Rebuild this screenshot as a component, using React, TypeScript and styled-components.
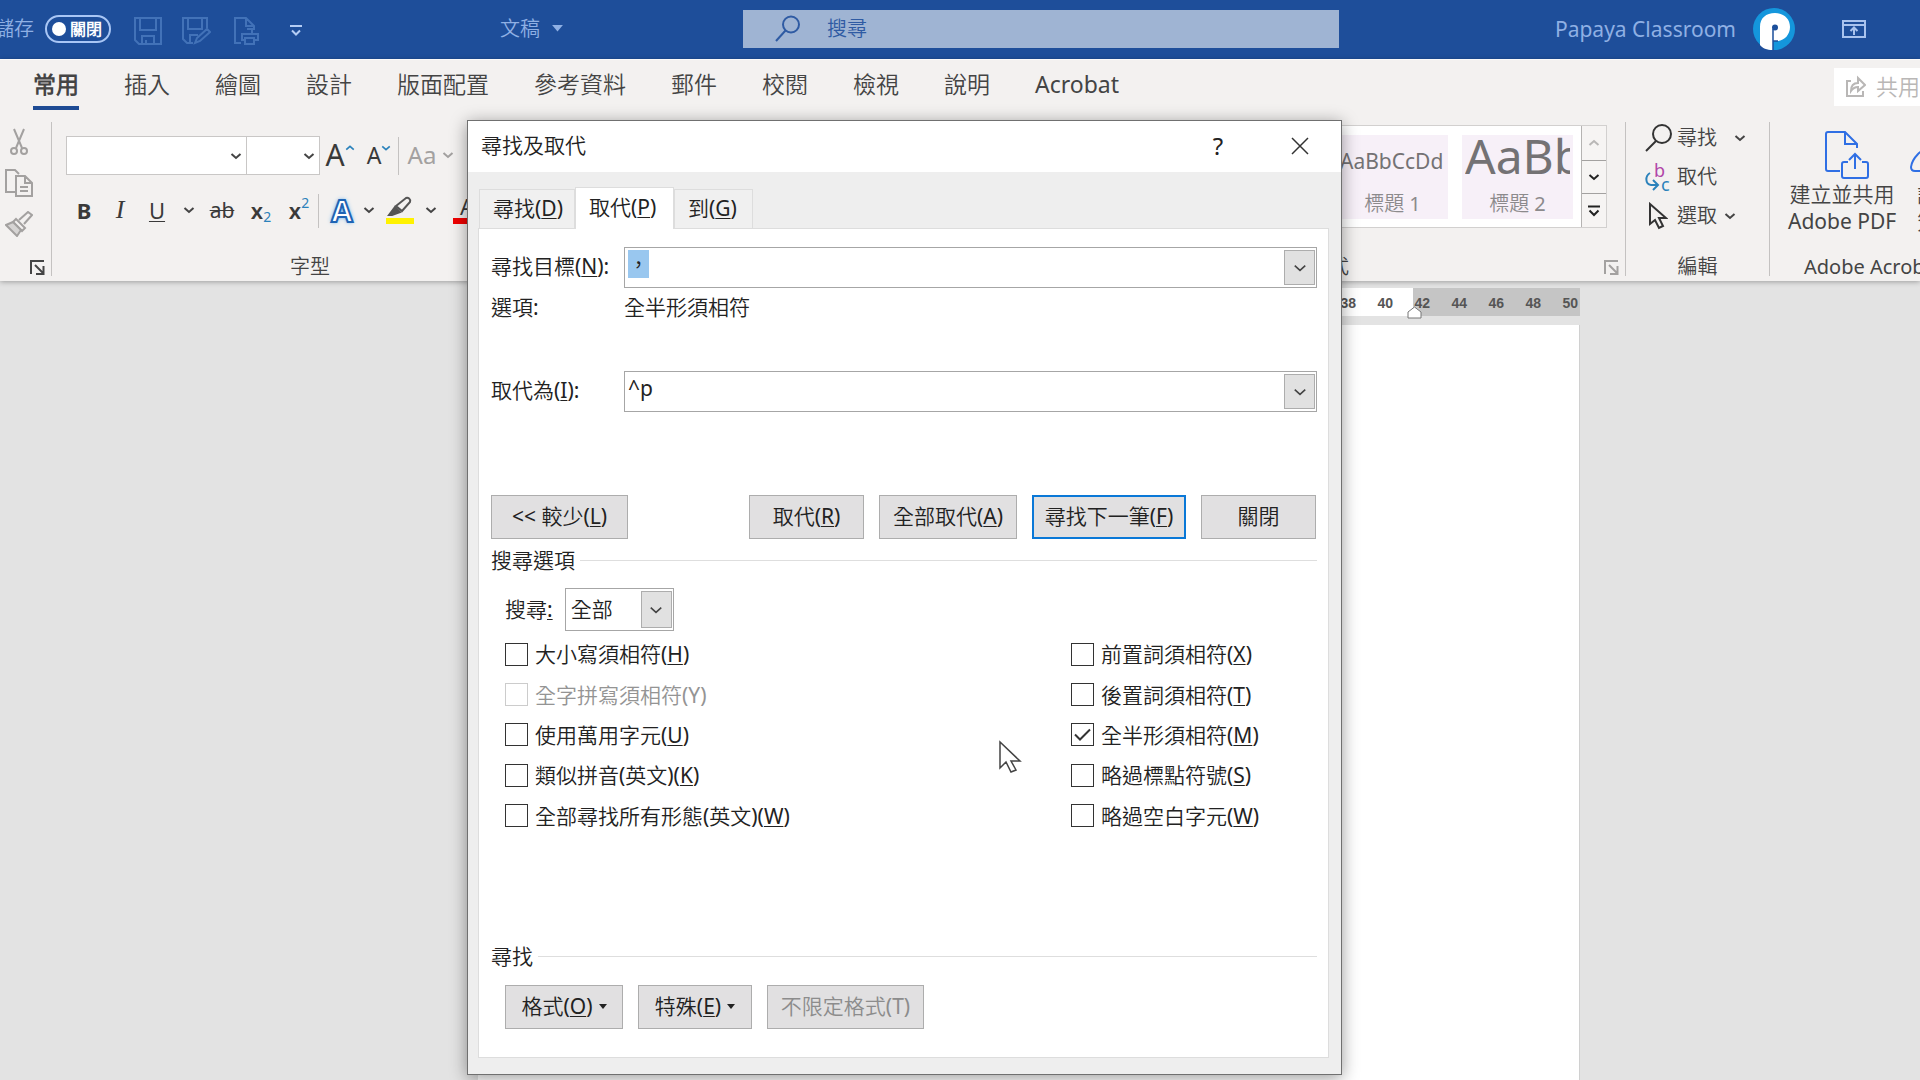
import React, { useEffect, useRef } from 'react';
import styled, { createGlobalStyle } from 'styled-components';

const ui = '"Noto Sans", "Noto Sans CJK TC DemiLight", "Noto Sans CJK TC", sans-serif';

const GlobalStyle = createGlobalStyle`
  * { box-sizing: border-box; }
  body { margin: 0; font-family: ${ui}; font-weight: 400; color: #444; background: #e3e3e3; }
  button, input, select { font: inherit; color: inherit; margin: 0; padding: 0; border: 0; background: none; border-radius: 0; }
  h1, h2, p { margin: 0; font: inherit; }
  u { text-underline-offset: 2px; text-decoration-thickness: 1px; }
`;

const Screen = styled.div`
  height: 100vh;
  overflow: hidden;
  display: flex;
  flex-direction: column;
`;

/* ---------- title bar ---------- */

const TitleBar = styled.header`
  flex: none;
  height: 59px;
  display: grid;
  grid-template-columns: minmax(0, 743fr) minmax(0, 596fr) minmax(0, 581fr);
  align-items: center;
  background: #1e4e9a;
  color: #8fb0e4;
  line-height: 28px;
  font-size: 20px;
  padding-bottom: 2px;
`;

const QuickAccess = styled.div`
  display: flex;
  align-items: center;
  overflow: hidden;
`;

const AutoSave = styled.label`
  display: flex;
  align-items: center;
  gap: 11px;
  margin-left: -6px;
  margin-right: 14px;
`;

const Toggle = styled.button`
  display: flex;
  align-items: center;
  gap: 4px;
  width: 66px;
  height: 28px;
  padding-left: 5px;
  border: 2px solid #a9c6f5;
  border-radius: 14px;
  color: #fff;
  font-size: 16px;
  font-weight: 700;
  line-height: 24px;
`;

const Knob = styled.span`
  width: 14px;
  height: 14px;
  border-radius: 50%;
  background: #fff;
`;

const QuickButton = styled.button<{ $w?: number }>`
  display: flex;
  align-items: center;
  justify-content: center;
  width: ${(p) => p.$w ?? 50}px;
  height: 40px;
  padding-top: 4px;
  color: #4272b8;
`;

const DocTitle = styled.button`
  display: flex;
  align-items: center;
  gap: 12px;
  margin-left: 179px;
`;

const SearchBox = styled.label`
  display: flex;
  align-items: center;
  gap: 26px;
  height: 38px;
  padding-left: 32px;
  background: #9fb4d3;
  color: #2f5ba3;
`;

const SearchInput = styled.input`
  flex: 1;
  min-width: 0;
  outline: none;
  &::placeholder { color: #2f5ba3; opacity: 1; }
`;

const Account = styled.div`
  display: flex;
  align-items: center;
  justify-content: flex-end;
  padding-right: 54px;
  gap: 17px;
  font-size: 21px;
`;

const WindowButton = styled.button`
  display: flex;
  margin-left: 30px;
  color: #a9c3ee;
`;

/* ---------- ribbon ---------- */

const Ribbon = styled.section`
  flex: none;
  position: relative;
  background: #f3f1f0;
  border-top: 1px solid #fbfaf9;
  box-shadow: 0 1px 5px rgba(0, 0, 0, 0.3);
`;

const RibbonTabs = styled.nav`
  display: flex;
  align-items: flex-start;
  gap: 45px;
  height: 55px;
  padding-left: 33px;
`;

const RibbonTab = styled.button<{ $active?: boolean }>`
  height: 50px;
  padding-top: 2px;
  white-space: nowrap;
  font-size: 23px;
  line-height: 32px;
  font-weight: ${(p) => (p.$active ? 700 : 400)};
  border-bottom: 4px solid ${(p) => (p.$active ? '#1e4b94' : 'transparent')};
`;

const ShareButton = styled.button`
  display: flex;
  align-items: center;
  gap: 10px;
  width: 86px;
  height: 38px;
  margin: 8px 0 0 auto;
  padding: 0 0 2px 12px;
  overflow: hidden;
  white-space: nowrap;
  background: #fff;
  color: #b9b7b6;
  font-size: 22px;
  line-height: 32px;
`;

const RibbonBody = styled.div`
  display: flex;
  height: 166px;
  overflow: hidden;
  padding: 3px 0 2px;
`;

const Divider = styled.span<{ $h?: number }>`
  flex: none;
  width: 1px;
  align-self: center;
  height: ${(p) => (p.$h ? p.$h + 'px' : '154px')};
  background: #c4c2c1;
`;

const Group = styled.div<{ $w?: number; $pad?: number }>`
  display: flex;
  flex-direction: column;
  flex: ${(p) => (p.$w ? `0 0 ${p.$w}px` : '1 1 0')};
  min-width: 0;
  padding-left: ${(p) => p.$pad ?? 0}px;
`;

const GroupFooter = styled.div<{ $shift?: number; $start?: number }>`
  display: flex;
  justify-content: ${(p) => (p.$start ? 'flex-start' : 'center')};
  align-items: center;
  position: relative;
  margin-top: auto;
  height: 24px;
  margin-left: ${(p) => p.$start ?? -(p.$shift ?? 0)}px;
  font-size: 20px;
  line-height: 24px;
  white-space: nowrap;
`;

const Launcher = styled.button<{ $faint?: boolean }>`
  display: flex;
  position: absolute;
  right: 6px;
  top: 5px;
  color: ${(p) => (p.$faint ? '#a3a1a0' : '#444')};
`;

const ClipButton = styled.button`
  display: flex;
  align-items: center;
  justify-content: center;
  height: 41px;
  width: 38px;
  color: #a3a1a0;
`;

const ToolRow = styled.div<{ $top: number; $h: number }>`
  display: flex;
  align-items: center;
  height: ${(p) => p.$h}px;
  margin-top: ${(p) => p.$top}px;
`;

const Tool = styled.button<{ $w: number }>`
  display: flex;
  flex: none;
  align-items: center;
  justify-content: center;
  width: ${(p) => p.$w}px;
  height: 34px;
  padding-bottom: 2px;
  font-size: 22px;
  line-height: 32px;
  svg { flex: none; }
`;

const Letter = styled.span<{ $size?: number; $weight?: number; $color?: string }>`
  font-size: ${(p) => p.$size ?? 22}px;
  font-weight: ${(p) => p.$weight ?? 400};
  color: ${(p) => p.$color ?? '#3a3a3a'};
`;

const ItalicLetter = styled(Letter)`
  font-family: "Liberation Serif", serif;
  font-style: italic;
  font-size: 26px;
`;

const StruckLetters = styled(Letter)`
  text-decoration: line-through;
  text-decoration-thickness: 1px;
`;

const Script = styled.span<{ $up?: boolean }>`
  align-self: ${(p) => (p.$up ? 'flex-start' : 'flex-end')};
  font-size: 14px;
  line-height: 18px;
  font-weight: 400;
  color: #2b82bb;
`;

const GlowLetter = styled.span`
  font-size: 31px;
  font-weight: 700;
  color: #fff;
  -webkit-text-stroke: 2px #1f64b4;
  text-shadow: 0 0 3px #6db4ee, 0 0 5px #6db4ee;
`;

const CaseCaret = styled.span`
  display: flex;
  margin-left: 6px;
  color: #a3a1a0;
`;

const ColorBarTool = styled.span`
  display: flex;
  flex-direction: column;
  align-items: center;
  line-height: 20px;
`;

const ColorBar = styled.span<{ $color: string }>`
  width: 28px;
  height: 6px;
  margin-top: 2px;
  background: ${(p) => p.$color};
`;

const RibbonSelectWrap = styled.span<{ $w: number }>`
  display: grid;
  flex: none;
  align-items: center;
  width: ${(p) => p.$w}px;
  height: 39px;
  background: #fff;
  border: 1px solid #c9c7c6;
  & + & { border-left: 0; }
  > * { grid-area: 1 / 1; }
  > svg { justify-self: end; margin-right: 4px; pointer-events: none; }
`;

const RibbonSelect = styled.select`
  appearance: none;
  width: 100%;
  height: 100%;
  outline: none;
`;

const Gallery = styled.div`
  display: flex;
  align-self: flex-end;
  margin: 7px 18px 0 0;
  height: 103px;
  border: 1px solid #d2d0cf;
  background: #fff;
`;

const StyleCards = styled.div`
  display: flex;
  align-items: center;
  gap: 14px;
  padding: 0 8px;
`;

const StyleCard = styled.button`
  display: flex;
  flex-direction: column;
  align-items: center;
  justify-content: space-between;
  width: 111px;
  height: 84px;
  background: #f7f0f8;
  color: #8c8a8c;
  font-size: 20px;
  line-height: 30px;
`;

const Sample = styled.span<{ $size: number; $line: number }>`
  width: 105px;
  overflow: hidden;
  white-space: nowrap;
  text-align: left;
  font-size: ${(p) => p.$size}px;
  line-height: ${(p) => p.$line}px;
  color: #747274;
`;

const GalleryScroll = styled.div`
  display: grid;
  grid-template-rows: repeat(3, 1fr);
  width: 25px;
  border-left: 1px solid #b5b3b2;
`;

const ScrollButton = styled.button<{ $off?: boolean }>`
  display: flex;
  align-items: center;
  justify-content: center;
  background: #f6f4f3;
  color: ${(p) => (p.$off ? '#b9b7b6' : '#222')};
  & + & { border-top: 1px solid #a3a1a0; }
`;

const EditButton = styled.button`
  display: flex;
  align-items: center;
  gap: 5px;
  height: 39px;
  font-size: 20px;
  line-height: 28px;
`;

const EditIcon = styled.span`
  display: flex;
  justify-content: center;
  width: 28px;
`;

const EditCaret = styled.span<{ $gap: number }>`
  display: flex;
  margin-left: ${(p) => p.$gap}px;
`;

const AdobeRow = styled.div`
  display: flex;
  gap: 14px;
  padding-top: 13px;
`;

const AdobeButton = styled.button<{ $lead?: number }>`
  display: flex;
  flex-direction: column;
  flex: none;
  align-items: center;
  min-width: 56px;
  font-size: 21px;
  line-height: 27px;
  svg { margin: 0 0 2px ${(p) => p.$lead ?? 0}px; }
`;

/* ---------- document ---------- */

const Workspace = styled.main`
  flex: 1;
  display: flex;
  flex-direction: column;
  margin: 0 340px 0 478px;
`;

const Ruler = styled.div`
  position: relative;
  display: flex;
  justify-content: flex-end;
  flex: none;
  height: 28px;
  margin: 7px 0 9px;
  padding-right: 2px;
  background: linear-gradient(to left, #c5c5c5 167px, #fff 167px);
  font: 700 14px/30px "Liberation Sans", sans-serif;
  color: #555;
`;

const RulerMark = styled.span`
  width: 37px;
  text-align: right;
`;

const IndentMarker = styled.svg`
  position: absolute;
  right: 158px;
  top: 18px;
`;

const Page = styled.div`
  flex: 1;
  background: #fff;
  border-right: 1px solid #d0d0d0;
`;

/* ---------- dialog ---------- */

const Dialog = styled.div`
  position: absolute;
  left: 467px;
  top: 120px;
  width: 875px;
  border: 1px solid #707070;
  background: #eee;
  box-shadow: 0 3px 16px rgba(0, 0, 0, 0.4);
  color: #222;
  font-size: 21px;
  line-height: 28px;
  white-space: nowrap;
`;

const DialogTitle = styled.div`
  display: flex;
  align-items: center;
  height: 51px;
  padding: 0 0 3px 13px;
  background: #fff;
`;

const DialogTitleButton = styled.button`
  display: flex;
  align-items: center;
  justify-content: center;
  width: 82px;
  height: 48px;
  padding-top: 2px;
  font-size: 24px;
  h1 + & { margin-left: auto; }
`;

const DialogTabs = styled.div`
  display: flex;
  align-items: flex-end;
  height: 56px;
  padding-left: 11px;
`;

const DialogTab = styled.button<{ $w: number; $active?: boolean }>`
  position: relative;
  width: ${(p) => p.$w}px;
  height: ${(p) => (p.$active ? 42 : 39)}px;
  margin-bottom: ${(p) => (p.$active ? -1 : 0)}px;
  padding: 0 0 3px 13px;
  text-align: left;
  background: ${(p) => (p.$active ? '#fff' : '#f0f0f0')};
  border: 1px solid #ddd;
  border-bottom: 0;
`;

const Panel = styled.div`
  margin: 0 12px 16px 10px;
  padding: 18px 11px 28px 12px;
  border: 1px solid #ddd;
  background: #fff;
`;

const FieldRow = styled.div<{ $after?: number }>`
  display: grid;
  grid-template-columns: 133px 1fr;
  align-items: center;
  min-height: 41px;
  margin-bottom: ${(p) => p.$after ?? 0}px;
  > label, > span { padding-bottom: 3px; }
`;

const ComboBox = styled.div`
  display: flex;
  width: 100%;
  height: 41px;
  padding: 2px 1px 2px 2px;
  border: 1px solid #a6a6a6;
  background: #fff;
`;

const ComboInput = styled.input`
  flex: 1;
  min-width: 0;
  height: 28px;
  padding-left: 1px;
  line-height: 28px;
  outline: none;
  &::selection { background: #99c7ef; color: #222; }
`;

const ComboButton = styled.button`
  display: flex;
  align-items: center;
  justify-content: center;
  width: 31px;
  background: #e1e1e1;
  border: 1px solid #adadad;
  color: #444;
`;

const ScopeBox = styled.span`
  display: grid;
  align-items: center;
  width: 109px;
  height: 43px;
  padding: 2px 1px 2px 2px;
  border: 1px solid #a6a6a6;
  > * { grid-area: 1 / 1; }
`;

const ScopeSelect = styled.select`
  appearance: none;
  width: 100%;
  height: 37px;
  padding: 0 0 2px 3px;
  outline: none;
`;

const ScopeArrow = styled.span`
  display: flex;
  align-items: center;
  justify-content: center;
  justify-self: end;
  width: 31px;
  height: 37px;
  background: #e1e1e1;
  border: 1px solid #adadad;
  color: #444;
  pointer-events: none;
`;

const ButtonRow = styled.div<{ $top: number; $indent?: number }>`
  display: flex;
  gap: 15px;
  margin-top: ${(p) => p.$top}px;
  padding: 0 1px 0 ${(p) => p.$indent ?? 0}px;
`;

const PushButton = styled.button<{ $w: number; $primary?: boolean; $push?: boolean }>`
  display: flex;
  align-items: center;
  justify-content: center;
  gap: 6px;
  width: ${(p) => p.$w}px;
  height: 44px;
  padding-bottom: 2px;
  margin-right: ${(p) => (p.$push ? 'auto' : 0)};
  background: #e1e0e1;
  border: ${(p) => (p.$primary ? '2px solid #0a78d7' : '1px solid #adadad')};
  &:disabled { color: #8c8c8c; }
`;

const SectionTitle = styled.h2<{ $top?: number }>`
  display: flex;
  align-items: center;
  gap: 5px;
  height: 42px;
  margin-top: ${(p) => p.$top ?? 0}px;
  &::after { content: ''; flex: 1; height: 1px; background: #dedede; }
`;

const ScopeRow = styled.div`
  display: flex;
  align-items: center;
  gap: 12px;
  margin: 7px 0 3px;
  padding-left: 14px;
  > label { padding-bottom: 2px; }
`;

const Options = styled.div`
  display: grid;
  grid-template-columns: 566fr 246fr;
  grid-template-rows: repeat(5, 1fr);
  grid-auto-flow: column;
  height: 202px;
  padding-left: 14px;
`;

const Option = styled.label<{ $off?: boolean }>`
  display: flex;
  align-items: center;
  gap: 7px;
  color: ${(p) => (p.$off ? '#949494' : 'inherit')};
`;

const TickCell = styled.span`
  display: grid;
  > * { grid-area: 1 / 1; }
  svg { pointer-events: none; display: none; }
  input:checked + svg { display: block; }
`;

const Tick = styled.input`
  appearance: none;
  width: 23px;
  height: 23px;
  border: 1px solid #333;
  background: #fff;
  &:disabled { border-color: #ccc; }
`;

const Pointer = styled.svg`
  position: absolute;
  left: 530px;
  top: 619px;
`;

/* ---------- drawings ---------- */

const Chevron = ({ size = 12, weight = 2, up = false }: { size?: number; weight?: number; up?: boolean }) => (
  <svg width={size} height={size} viewBox="0 0 12 12" fill="none" stroke="currentColor" strokeWidth={weight}>
    <path d={up ? 'M1.500 8 6 4l4.500 4' : 'M1.500 4 6 8l4.500-4'} />
  </svg>
);

const ComboArrow = () => <Chevron size={14} weight={1.4} />;

const Caret = ({ w = 10 }: { w?: number }) => (
  <svg width={w} height={w / 2 + 1} viewBox="0 0 10 6" fill="currentColor"><path d="M0 0h10L5 6z" /></svg>
);

const LaunchIcon = () => (
  <svg width="15" height="15" viewBox="0 0 15 15" fill="none" stroke="currentColor" strokeWidth="2">
    <path d="M1 14V1h13M5 5l8 8M13.500 6v8H6" />
  </svg>
);

const Access = ({ k }: { k: string }) => <>(<u>{k}</u>)</>;

const leftOptions = [
  { text: '大小寫須相符', k: 'H' },
  { text: '全字拼寫須相符', k: 'Y', off: true },
  { text: '使用萬用字元', k: 'U' },
  { text: '類似拼音(英文)', k: 'K' },
  { text: '全部尋找所有形態(英文)', k: 'W' },
];

const rightOptions = [
  { text: '前置詞須相符', k: 'X' },
  { text: '後置詞須相符', k: 'T' },
  { text: '全半形須相符', k: 'M', on: true },
  { text: '略過標點符號', k: 'S' },
  { text: '略過空白字元', k: 'W' },
];

const ribbonTabs = ['常用', '插入', '繪圖', '設計', '版面配置', '參考資料', '郵件', '校閱', '檢視', '說明', 'Acrobat'];

function OptionItem({ text, k, off, on }: { text: string; k: string; off?: boolean; on?: boolean }) {
  return (
    <Option $off={off}>
      <TickCell>
        <Tick type="checkbox" disabled={off} defaultChecked={on} />
        <svg width="23" height="23" viewBox="0 0 23 23" fill="none" stroke="#333" strokeWidth="2"><path d="M4 11.500 9 16.500 19 6.500" /></svg>
      </TickCell>
      <span>{text}{off ? `(${k})` : <Access k={k} />}</span>
    </Option>
  );
}

function Header() {
  return (
    <TitleBar>
      <QuickAccess>
        <AutoSave>
          儲存
          <Toggle><Knob />關閉</Toggle>
        </AutoSave>
        <QuickButton $w={46} aria-label="儲存檔案">
          <svg width="28" height="28" viewBox="0 0 28 28" fill="none" stroke="currentColor" strokeWidth="2">
            <path d="M1 1h26v26H5l-4-4zM6 1v12h16V1M8 27v-8h12v8M12 27v-4" />
          </svg>
        </QuickButton>
        <QuickButton aria-label="另存">
          <svg width="30" height="28" viewBox="0 0 30 28" fill="none" stroke="currentColor" strokeWidth="2">
            <path d="M12 26H6l-4-4V1h24v10M7 1v11h14V1M9 26v-8h8M14 26l2-5L26 12l3 3-10 9z" />
          </svg>
        </QuickButton>
        <QuickButton aria-label="列印">
          <svg width="26" height="28" viewBox="0 0 26 28" fill="none" stroke="currentColor" strokeWidth="2">
            <path d="M8 26H2V1h11l8 8v4M13 1v8h8M14 12h5v6M12 23H9v-6h16v6h-3M12 21h9v6h-9z" />
          </svg>
        </QuickButton>
        <QuickButton $w={50} aria-label="自訂快速存取">
          <svg width="14" height="12" viewBox="0 0 14 12" fill="none" stroke="#b4cdf5" strokeWidth="2"><path d="M1 1h12M3 5.500l4 4 4-4" /></svg>
        </QuickButton>
        <DocTitle>文稿<Caret w={11} /></DocTitle>
      </QuickAccess>
      <SearchBox>
        <svg width="26" height="27" viewBox="0 0 26 27" fill="none" stroke="currentColor" strokeWidth="2">
          <circle cx="16" cy="9.500" r="8" /><path d="M10.500 15.500 1 26" />
        </svg>
        <SearchInput placeholder="搜尋" aria-label="搜尋" />
      </SearchBox>
      <Account>
        Papaya Classroom
        <svg width="42" height="42" viewBox="0 0 42 42">
          <circle cx="21" cy="21" r="21" fill="#1496dc" />
          <path d="M7 37V19C7 10 13 5 22 5s15 6 15 14-6 14-13 14h-4v9C14 42 9 40 7 37z" fill="#fff" />
          <path d="M20 42V21M20 33h5" stroke="#1b4f9b" strokeWidth="1.500" fill="none" />
          <circle cx="22" cy="19.500" r="3" fill="#1b4f9b" />
        </svg>
        <WindowButton aria-label="功能區顯示選項">
          <svg width="24" height="18" viewBox="0 0 24 18" fill="none" stroke="currentColor" strokeWidth="2">
            <path d="M1 1h22v16H1zM1 5h22M12 15V8M8.500 11 12 7.500 15.500 11" />
          </svg>
        </WindowButton>
      </Account>
    </TitleBar>
  );
}

function FontGroup() {
  return (
    <Group $w={516} $pad={14}>
      <ToolRow $top={18} $h={39}>
        <RibbonSelectWrap $w={181}><RibbonSelect aria-label="字型名稱"><option> </option></RibbonSelect><Chevron /></RibbonSelectWrap>
        <RibbonSelectWrap $w={73}><RibbonSelect aria-label="字型大小"><option> </option></RibbonSelect><Chevron /></RibbonSelectWrap>
        <Tool $w={40}><Letter $size={30}>A</Letter><Script $up><Chevron size={10} up /></Script></Tool>
        <Tool $w={38}><Letter $size={23}>A</Letter><Script $up><Chevron size={10} /></Script></Tool>
        <Divider $h={38} />
        <Tool $w={64}><Letter $size={24} $color="#a3a1a0">Aa</Letter><CaseCaret><Chevron /></CaseCaret></Tool>
      </ToolRow>
      <ToolRow $top={18} $h={36}>
        <Tool $w={36}><Letter $weight={700}>B</Letter></Tool>
        <Tool $w={36}><ItalicLetter>I</ItalicLetter></Tool>
        <Tool $w={38}><Letter><u>U</u></Letter></Tool>
        <Tool $w={26}><Chevron /></Tool>
        <Tool $w={40}><StruckLetters $size={21}>ab</StruckLetters></Tool>
        <Tool $w={38}><Letter $weight={600}>x</Letter><Script>2</Script></Tool>
        <Tool $w={38}><Letter $weight={600}>x</Letter><Script $up>2</Script></Tool>
        <Divider $h={34} />
        <Tool $w={46}><GlowLetter>A</GlowLetter></Tool>
        <Tool $w={8}><Chevron /></Tool>
        <Tool $w={54}>
          <ColorBarTool>
            <svg width="26" height="20" viewBox="0 0 26 20" fill="none" stroke="#555" strokeWidth="2">
              <path d="M9 10 19 2c2-1 5 1 4 4l-8 9zM9 10l6 5" /><path d="M8 11l5 5-8 3H2z" fill="#555" />
            </svg>
            <ColorBar $color="#fff200" />
          </ColorBarTool>
        </Tool>
        <Tool $w={8}><Chevron /></Tool>
        <Tool $w={64}><ColorBarTool><Letter $size={22}>A</Letter><ColorBar $color="#f00000" /></ColorBarTool></Tool>
      </ToolRow>
      <GroupFooter $shift={14}>字型</GroupFooter>
    </Group>
  );
}

function RibbonArea() {
  return (
    <Ribbon>
      <RibbonTabs>
        {ribbonTabs.map((t, i) => <RibbonTab key={t} $active={i === 0}>{t}</RibbonTab>)}
        <ShareButton>
          <svg width="20" height="22" viewBox="0 0 20 22" fill="none" stroke="currentColor" strokeWidth="2">
            <path d="M5 6H1v15h16v-5M5 16c0-6 3-8 7-8V3l7 7-7 6v-4c-3 0-5 1-7 4z" />
          </svg>
          共用
        </ShareButton>
      </RibbonTabs>
      <RibbonBody>
        <Group $w={51}>
          <ToolRow $top={3} $h={41}>
            <ClipButton aria-label="剪下">
              <svg width="18" height="28" viewBox="0 0 18 28" fill="none" stroke="currentColor" strokeWidth="2">
                <path d="M4 1l8 19M14 1 6 20" /><circle cx="4" cy="23" r="3" /><circle cx="14" cy="23" r="3" />
              </svg>
            </ClipButton>
          </ToolRow>
          <ToolRow $top={0} $h={41}>
            <ClipButton aria-label="複製">
              <svg width="28" height="28" viewBox="0 0 28 28" fill="none" stroke="currentColor" strokeWidth="2">
                <path d="M10 23H1V1h9l4 4M11 7h9l7 7v13H11zM20 7v7h7M15 18h8M15 22h8" />
              </svg>
            </ClipButton>
          </ToolRow>
          <ToolRow $top={0} $h={41}>
            <ClipButton aria-label="複製格式">
              <svg width="28" height="26" viewBox="0 0 28 26" fill="none" stroke="currentColor" strokeWidth="2">
                <path d="M14 9l9-8 4 3-8 9M11 8l9 9-3 3-9-9z" /><path d="M8 11 1 14l11 11 4-6z" fill="#d6d4d3" />
              </svg>
            </ClipButton>
          </ToolRow>
          <GroupFooter><Launcher aria-label="剪貼簿設定"><LaunchIcon /></Launcher></GroupFooter>
        </Group>
        <Divider />
        <FontGroup />
        <Divider />
        <Group />
        <Divider />
        <Group $w={592}>
          <Gallery>
            <StyleCards>
              <StyleCard><Sample $size={21} $line={52}>AaBbCcDd</Sample>標題 1</StyleCard>
              <StyleCard><Sample $size={48} $line={42}>AaBb</Sample>標題 2</StyleCard>
            </StyleCards>
            <GalleryScroll>
              <ScrollButton $off aria-label="上一列"><Chevron up /></ScrollButton>
              <ScrollButton aria-label="下一列"><Chevron /></ScrollButton>
              <ScrollButton aria-label="更多樣式">
                <svg width="14" height="12" viewBox="0 0 14 12" fill="none" stroke="currentColor" strokeWidth="2"><path d="M1 1.500h12M2.500 5.500 7 10l4.500-4.500" /></svg>
              </ScrollButton>
            </GalleryScroll>
          </Gallery>
          <GroupFooter>樣式<Launcher $faint aria-label="樣式設定"><LaunchIcon /></Launcher></GroupFooter>
        </Group>
        <Divider />
        <Group $w={143} $pad={18}>
          <EditButton>
            <EditIcon>
              <svg width="28" height="28" viewBox="0 0 28 28" fill="none" stroke="#333" strokeWidth="2"><circle cx="18" cy="10" r="9" /><path d="M12 17 2 27" /></svg>
            </EditIcon>
            尋找<EditCaret $gap={12}><Chevron /></EditCaret>
          </EditButton>
          <EditButton>
            <EditIcon>
              <svg width="26" height="30" viewBox="0 0 26 30" fill="none" strokeWidth="2">
                <text x="9" y="15" fontSize="18" fill="#b146a8">b</text>
                <text x="16" y="29" fontSize="18" fill="#2b82bb">c</text>
                <path d="M5 11c-5 3-5 11 1 12h6M8 18l5 5-5 5" stroke="#2b82bb" />
              </svg>
            </EditIcon>
            取代
          </EditButton>
          <EditButton>
            <EditIcon>
              <svg width="20" height="28" viewBox="0 0 20 28" fill="none" stroke="#333" strokeWidth="2"><path d="M2 2v20l5-4 4 8 4-2-4-8h7z" /></svg>
            </EditIcon>
            選取<EditCaret $gap={2}><Chevron /></EditCaret>
          </EditButton>
          <GroupFooter $shift={18}>編輯</GroupFooter>
        </Group>
        <Divider />
        <Group $w={150} $pad={18}>
          <AdobeRow>
            <AdobeButton $lead={10}>
              <svg width="46" height="48" viewBox="0 0 46 48" fill="none" stroke="#2f6fe4" strokeWidth="2">
                <path d="M16 40H4c-1 0-2-1-2-2V3c0-1 1-2 2-2h17l12 12v4M21 1v12h12" />
                <path d="M24 31h-4c-1 0-2 1-2 2v12c0 1 1 2 2 2h22c1 0 2-1 2-2V33c0-1-1-2-2-2h-4M31 38V23M25 29l6-6 6 6" />
              </svg>
              <span>建立並共用</span><span>Adobe PDF</span>
            </AdobeButton>
            <AdobeButton>
              <svg width="56" height="48" viewBox="0 0 56 48" fill="none" stroke="#2f6fe4" strokeWidth="2">
                <path d="M24 14C10 18 2 28 1 36c0 3 1 4 4 4h30" />
              </svg>
              <span>請求</span><span>簽章</span>
            </AdobeButton>
          </AdobeRow>
          <GroupFooter $start={16}>Adobe Acrobat</GroupFooter>
        </Group>
      </RibbonBody>
    </Ribbon>
  );
}

function FindReplaceDialog() {
  const findRef = useRef<HTMLInputElement>(null);
  useEffect(() => {
    findRef.current?.focus();
    findRef.current?.select();
  }, []);

  return (
    <Dialog role="dialog" aria-label="尋找及取代">
      <DialogTitle>
        <h1>尋找及取代</h1>
        <DialogTitleButton>?</DialogTitleButton>
        <DialogTitleButton aria-label="關閉視窗">
          <svg width="18" height="18" viewBox="0 0 18 18" stroke="#333" strokeWidth="1.500"><path d="M1 1l16 16M17 1 1 17" /></svg>
        </DialogTitleButton>
      </DialogTitle>
      <DialogTabs>
        <DialogTab $w={96}>尋找<Access k="D" /></DialogTab>
        <DialogTab $w={99} $active>取代<Access k="P" /></DialogTab>
        <DialogTab $w={79}>到<Access k="G" /></DialogTab>
      </DialogTabs>
      <Panel>
        <FieldRow>
          <label htmlFor="find">尋找目標<Access k="N" />:</label>
          <ComboBox>
            <ComboInput id="find" ref={findRef} defaultValue="，" />
            <ComboButton aria-label="尋找紀錄"><ComboArrow /></ComboButton>
          </ComboBox>
        </FieldRow>
        <FieldRow $after={42}><span>選項:</span><span>全半形須相符</span></FieldRow>
        <FieldRow>
          <label htmlFor="replace">取代為<Access k="I" />:</label>
          <ComboBox>
            <ComboInput id="replace" defaultValue="^p" />
            <ComboButton aria-label="取代紀錄"><ComboArrow /></ComboButton>
          </ComboBox>
        </FieldRow>
        <ButtonRow $top={83}>
          <PushButton $w={137} $push><span>&lt;&lt; 較少<Access k="L" /></span></PushButton>
          <PushButton $w={115}><span>取代<Access k="R" /></span></PushButton>
          <PushButton $w={138}><span>全部取代<Access k="A" /></span></PushButton>
          <PushButton $w={154} $primary><span>尋找下一筆<Access k="F" /></span></PushButton>
          <PushButton $w={115}>關閉</PushButton>
        </ButtonRow>
        <SectionTitle>搜尋選項</SectionTitle>
        <ScopeRow>
          <label htmlFor="scope">搜尋<u>:</u></label>
          <ScopeBox>
            <ScopeSelect id="scope"><option>全部</option></ScopeSelect>
            <ScopeArrow><ComboArrow /></ScopeArrow>
          </ScopeBox>
        </ScopeRow>
        <Options>
          {leftOptions.map((o) => <OptionItem key={o.text} {...o} />)}
          {rightOptions.map((o) => <OptionItem key={o.text} {...o} />)}
        </Options>
        <SectionTitle $top={99}>尋找</SectionTitle>
        <ButtonRow $top={8} $indent={14}>
          <PushButton $w={118}><span>格式<Access k="O" /></span><Caret w={8} /></PushButton>
          <PushButton $w={114}><span>特殊<Access k="E" /></span><Caret w={8} /></PushButton>
          <PushButton $w={157} disabled>不限定格式(T)</PushButton>
        </ButtonRow>
      </Panel>
      <Pointer width="24" height="34" viewBox="0 0 24 34" fill="#fff" stroke="#444" strokeWidth="1.500">
        <path d="M2 2v26l6-6 5 10 5-2-5-9h9z" />
      </Pointer>
    </Dialog>
  );
}

export default function App() {
  return (
    <Screen lang="zh-Hant">
      <GlobalStyle />
      <Header />
      <RibbonArea />
      <Workspace>
        <Ruler>
          {[38, 40, 42, 44, 46, 48, 50].map((n) => <RulerMark key={n}>{n}</RulerMark>)}
          <IndentMarker width="15" height="13" viewBox="0 0 15 13" fill="#fff" stroke="#777"><path d="M1 12V6l6.500-5L14 6v6z" /></IndentMarker>
        </Ruler>
        <Page />
      </Workspace>
      <FindReplaceDialog />
    </Screen>
  );
}
